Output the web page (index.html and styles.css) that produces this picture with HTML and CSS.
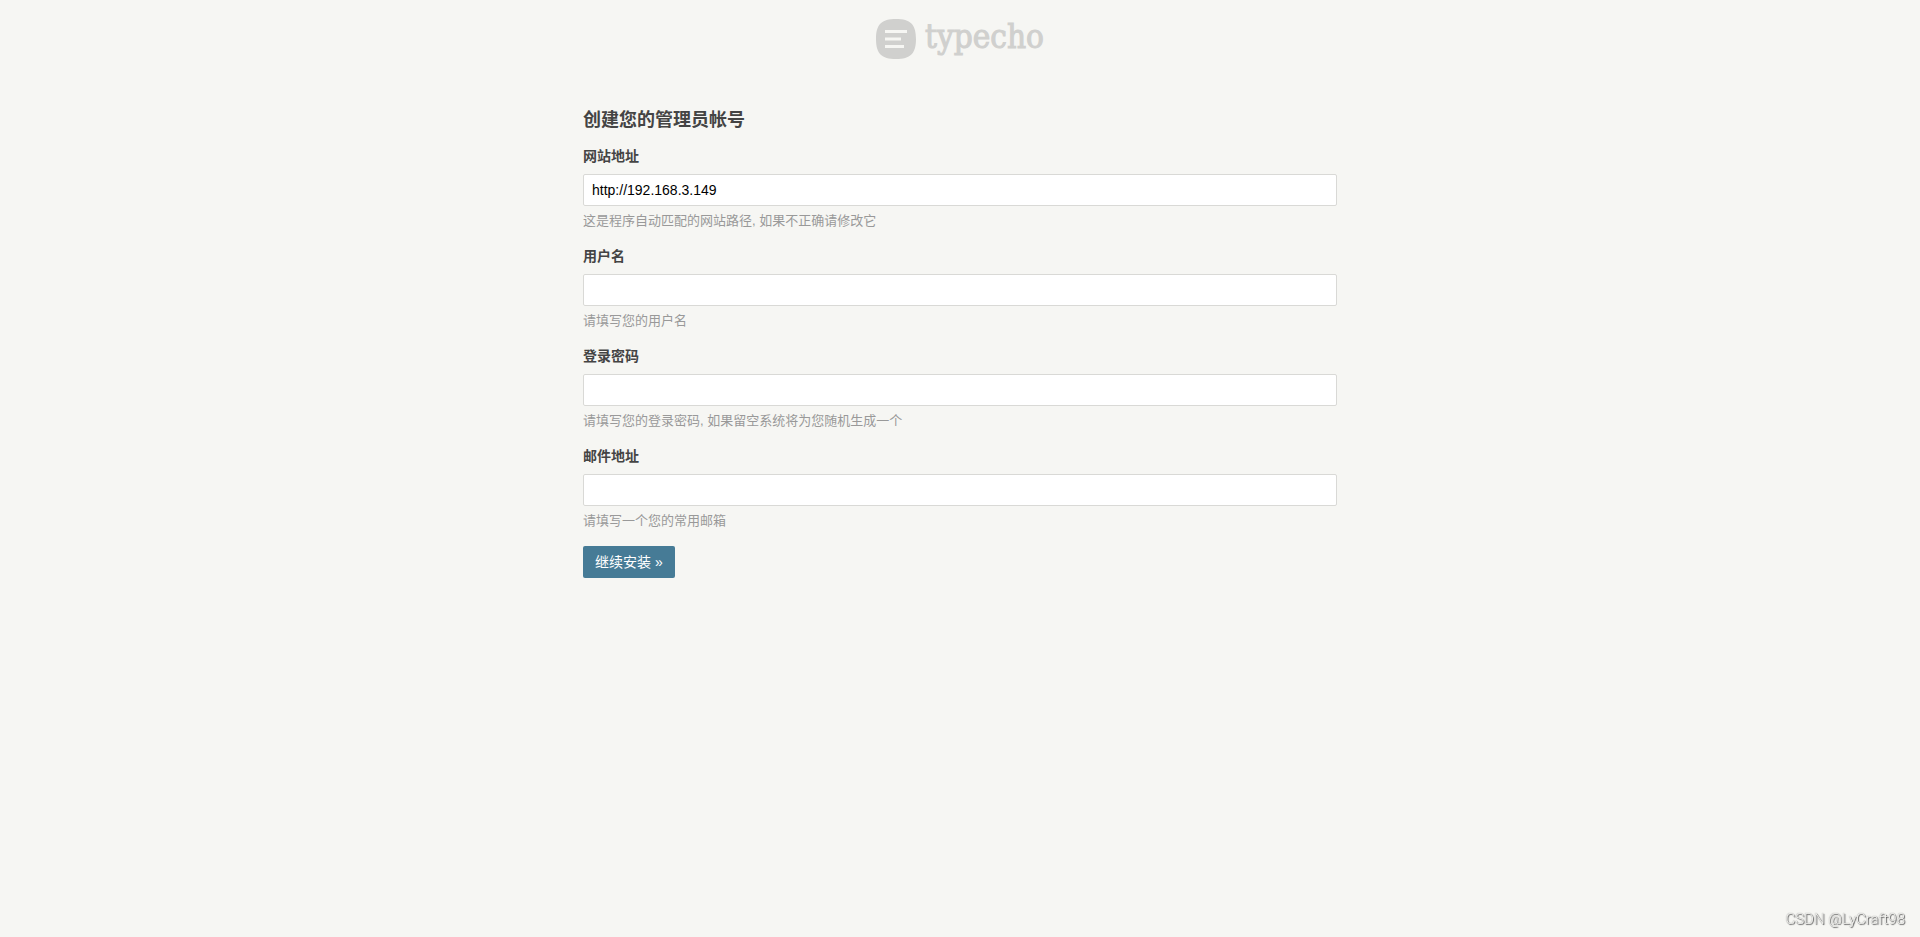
FILE: index.html
```html
<!DOCTYPE html>
<html lang="zh-CN">
    <head>
        <meta charset="UTF-8">
        <title>Typecho 安装程序</title>
        <link rel="stylesheet" href="styles.css">
    </head>
    <body>
        <header class="logo">
            <svg width="40" height="40" viewBox="0 0 40 40" aria-hidden="true">
                <path fill="#d0d0ce" fill-rule="evenodd" d="M20 0C34.5 0 40 5.5 40 20S34.5 40 20 40 0 34.5 0 20 5.5 0 20 0zM9 11v3h22v-3zM9 18.5v3h16v-3zM9 26v3h19v-3z"/>
            </svg>
            <span class="logo-text">typecho</span>
        </header>

        <main class="container">
            <form>
                <h1>创建您的管理员帐号</h1>
                <div class="option">
                    <label for="userUrl">网站地址</label>
                    <input type="text" id="userUrl" name="userUrl" value="http://192.168.3.149">
                    <p class="description">这是程序自动匹配的网站路径, 如果不正确请修改它</p>
                </div>
                <div class="option">
                    <label for="userName">用户名</label>
                    <input type="text" id="userName" name="userName">
                    <p class="description">请填写您的用户名</p>
                </div>
                <div class="option">
                    <label for="userPassword">登录密码</label>
                    <input type="password" id="userPassword" name="userPassword">
                    <p class="description">请填写您的登录密码, 如果留空系统将为您随机生成一个</p>
                </div>
                <div class="option">
                    <label for="userMail">邮件地址</label>
                    <input type="text" id="userMail" name="userMail">
                    <p class="description">请填写一个您的常用邮箱</p>
                </div>
                <button type="submit" class="primary">继续安装 »</button>
            </form>
        </main>

        <div class="watermark">CSDN @LyCraft98</div>
    </body>
</html>
```

FILE: styles.css
```css
* {
    box-sizing: border-box;
}
body {
    margin: 0;
    background: #f6f6f3;
    color: #444;
    font-family: "Liberation Sans", "Noto Sans CJK SC", sans-serif;
    font-size: 14px;
    line-height: 20px;
}
.logo {
    display: flex;
    justify-content: center;
    gap: 9px;
    padding-top: 19px;
}
.logo-text {
    color: #d0d0ce;
    font-family: "DejaVu Serif Condensed", "DejaVu Serif", serif;
    font-size: 33px;
    line-height: 36px;
    -webkit-text-stroke: 1px #d0d0ce;
}
.container {
    max-width: 794px;
    margin: 0 auto;
    padding: 49px 20px;
}
h1 {
    margin: 0 0 14px;
    font-size: 18px;
    line-height: 24px;
}
.option {
    margin-bottom: 15px;
}
label {
    display: block;
    margin-bottom: 8px;
    font-weight: bold;
}
input {
    display: block;
    width: 100%;
    height: 32px;
    padding: 0 8px;
    border: 1px solid #d9d9d6;
    border-radius: 2px;
    background: #fff;
    color: #000;
    font-family: inherit;
    font-size: 14px;
}
.description {
    margin: 5px 0 0;
    color: #999;
    font-size: 13px;
    line-height: 20px;
}
.primary {
    height: 32px;
    padding: 0 12px;
    border: none;
    border-radius: 2px;
    background: #467b96;
    color: #fff;
    font-family: inherit;
    font-size: 14px;
    line-height: 28px;
    cursor: pointer;
}
.primary:hover {
    background: #3c6a81;
}
.watermark {
    position: fixed;
    right: 15px;
    bottom: 8px;
    color: #f6f6f3;
    font-family: Roboto, sans-serif;
    font-size: 15px;
    font-weight: 300;
    text-shadow: 1px 1px 1px #555, 0 0 1px #777;
}
```
